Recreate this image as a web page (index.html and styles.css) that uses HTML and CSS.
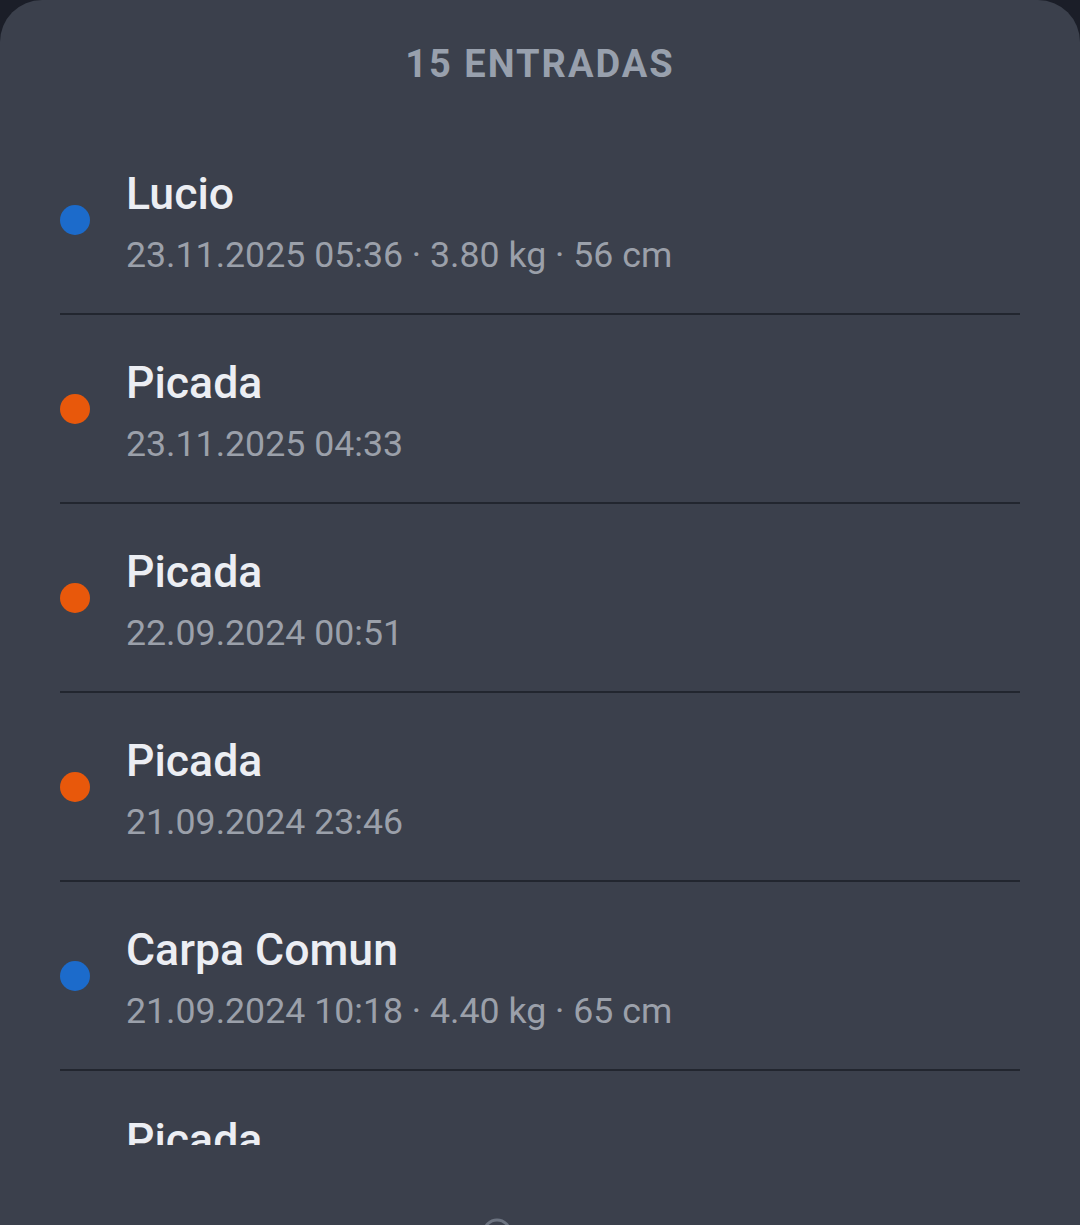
FILE: index.html
```html
<!DOCTYPE html>
<html>
<head>
  <meta http-equiv="Content-Type" content="text/html; charset=UTF-8">
  <title>Entradas</title>
  <link rel="stylesheet" href="styles.css">
</head>
<body>
  <div class="sheet">
    <h2 class="sheet-title">15 ENTRADAS</h2>
    <div class="entries">
      <div class="entry">
        <span class="dot catch"></span>
        <div class="entry-text">
          <div class="entry-name">Lucio</div>
          <div class="entry-meta">23.11.2025 05:36 · 3.80 kg · 56 cm</div>
        </div>
      </div>
      <div class="entry">
        <span class="dot bite"></span>
        <div class="entry-text">
          <div class="entry-name">Picada</div>
          <div class="entry-meta">23.11.2025 04:33</div>
        </div>
      </div>
      <div class="entry">
        <span class="dot bite"></span>
        <div class="entry-text">
          <div class="entry-name">Picada</div>
          <div class="entry-meta">22.09.2024 00:51</div>
        </div>
      </div>
      <div class="entry">
        <span class="dot bite"></span>
        <div class="entry-text">
          <div class="entry-name">Picada</div>
          <div class="entry-meta">21.09.2024 23:46</div>
        </div>
      </div>
      <div class="entry">
        <span class="dot catch"></span>
        <div class="entry-text">
          <div class="entry-name">Carpa Comun</div>
          <div class="entry-meta">21.09.2024 10:18 · 4.40 kg · 65 cm</div>
        </div>
      </div>
      <div class="entry">
        <span class="dot bite"></span>
        <div class="entry-text">
          <div class="entry-name">Picada</div>
        </div>
      </div>
    </div>
    <div class="sheet-foot">
      <svg class="ring" width="32" height="32" viewBox="0 0 32 32">
        <circle cx="16" cy="16" r="13" fill="none" stroke="#6c7380" stroke-width="3"/>
      </svg>
    </div>
  </div>
</body>
</html>
```

FILE: styles.css
```css
html, body {
  margin: 0;
  padding: 0;
}
body {
  background-color: #1b1e28;
  font-family: Roboto, "Liberation Sans", sans-serif;
}
.sheet {
  height: 1225px;
  background-color: #3b404c;
  border-radius: 42px 42px 0 0;
  overflow: hidden;
}
.sheet-title {
  margin: 0;
  padding: 41px 0 39px;
  text-align: center;
  font-size: 38px;
  line-height: 46px;
  font-weight: 700;
  letter-spacing: 2px;
  color: #98a0ad;
}
.entries {
  height: 1019px;
  overflow: hidden;
}
.entry {
  display: flex;
  align-items: center;
  height: 187px;
  margin: 0 60px;
  border-bottom: 2px solid #22262f;
}
.entry:last-child .entry-text {
  align-self: flex-start;
  padding-top: 41px;
}
.dot {
  flex: none;
  width: 30px;
  height: 30px;
  border-radius: 50%;
}
.dot.catch {
  background-color: #1c6bcb;
}
.dot.bite {
  background-color: #e8580b;
}
.entry-text {
  margin-left: 36px;
  padding-top: 6px;
}
.entry-name {
  font-size: 44.6px;
  line-height: 56px;
  font-weight: 500;
  color: #eceef3;
}
.entry-meta {
  margin-top: 9px;
  font-size: 35.7px;
  line-height: 48px;
  color: #9ba0aa;
}
.sheet-foot {
  display: flex;
  padding: 72px 0 0 481px;
}
```
